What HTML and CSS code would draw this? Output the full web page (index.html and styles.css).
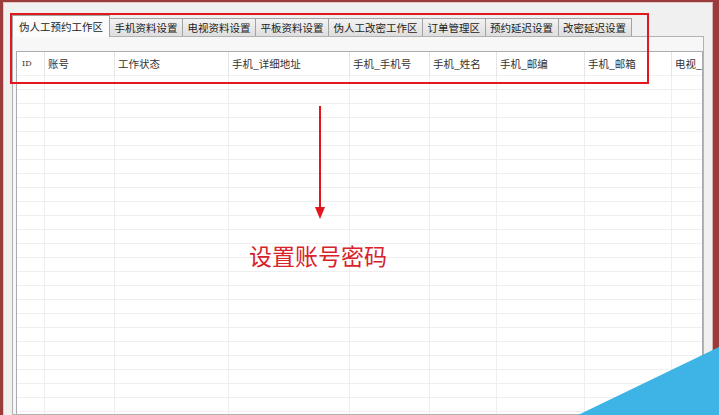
FILE: index.html
```html
<!DOCTYPE html>
<html lang="zh-CN">
<head>
  <meta charset="UTF-8" />
  <title>伪人工预约工作区</title>
  <link rel="stylesheet" href="styles.css">
</head>
<body>

  <div class="window">
    <!-- Tabs -->
    <div class="tabs">
      <div class="tab active">伪人工预约工作区</div>
      <div class="tab">手机资料设置</div>
      <div class="tab">电视资料设置</div>
      <div class="tab">平板资料设置</div>
      <div class="tab">伪人工改密工作区</div>
      <div class="tab">订单管理区</div>
      <div class="tab">预约延迟设置</div>
      <div class="tab">改密延迟设置</div>
    </div>

    <!-- Tab page -->
    <div class="panel">
      <div class="list">
        <div class="list-head">
          <div class="col id">ID</div>
          <div class="col">账号</div>
          <div class="col">工作状态</div>
          <div class="col">手机_详细地址</div>
          <div class="col">手机_手机号</div>
          <div class="col">手机_姓名</div>
          <div class="col">手机_邮编</div>
          <div class="col">手机_邮箱</div>
          <div class="col">电视_</div>
        </div>
        <div class="list-body">
          <div></div><div></div><div></div><div></div><div></div>
          <div></div><div></div><div></div><div></div>
        </div>
      </div>
    </div>
  </div>

  <!-- Annotation -->
  <div class="mark-box"></div>
  <svg class="mark-arrow" width="16" height="116" viewBox="0 0 16 116">
    <line x1="8" y1="0" x2="8" y2="104" stroke="#e2161c" stroke-width="2"/>
    <polygon points="3,101 13,101 8,113" fill="#e2161c"/>
  </svg>
  <div class="mark-text">设置账号密码</div>
  <svg class="corner" width="141" height="68" viewBox="0 0 141 68">
    <polygon points="0,68 141,0 141,68" fill="#3db4e5"/>
  </svg>

</body>
</html>
```

FILE: styles.css
```css
* { margin: 0; padding: 0; box-sizing: border-box; }
html, body { height: 100%; overflow: hidden; }
body {
  font-family: "Noto Sans CJK SC", "DejaVu Sans", sans-serif;
  background-color: #9a3c3c;
  padding: 2px 6px 0 3px;
}

.window {
  display: flex;
  flex-direction: column;
  height: 100%;
  background-color: #f0f0f0;
  box-shadow: inset 1px 1px 0 #e6c4c4, inset -1px 0 0 #d9b0b0;
  padding: 13px 9px 0 9px;
}

/* Tabs */
.tabs {
  display: flex;
  align-items: flex-end;
  height: 21px;
  padding-left: 1px;
}

.tab {
  position: relative;
  height: 18px;
  margin-left: -1px;
  padding: 0 4.5px;
  border: 1px solid #a3a3a3;
  border-bottom: none;
  background: linear-gradient(#f3f3f3, #dedede);
  font-size: 10.5px;
  line-height: 17px;
  color: #222;
  white-space: nowrap;
}

.tab.active {
  height: 22px;
  margin-bottom: -1px;
  padding: 0 6px;
  background: #fbfbfb;
  line-height: 21px;
  z-index: 1;
}

.panel {
  flex: 1;
  border: 1px solid #b2b2b2;
  background-color: #f7f7f7;
  padding: 14px 2px 0 3px;
  display: flex;
}

.list {
  flex: 1;
  background: #fff;
  border: 1px solid #a8acb2;
  border-bottom: none;
  display: flex;
  flex-direction: column;
}

.list-head,
.list-body {
  display: grid;
  grid-template-columns: 28px 70px 114px 121px 80px 67px 88px 87px 1fr;
}

.list-head {
  height: 24px;
  border-bottom: 1px solid #f0f0f0;
}

.col {
  font-size: 10.5px;
  line-height: 24px;
  color: #333;
  padding-left: 3px;
  border-right: 1px solid #e4e4e4;
  white-space: nowrap;
}

.col:last-child { border-right: none; }

.col.id {
  font-family: "DejaVu Serif", serif;
  font-size: 8px;
  padding-left: 5px;
}

.list-body {
  flex: 1;
  background: repeating-linear-gradient(to bottom, #fff 0 13px, #efefef 13px 14px);
}

.list-body div { border-right: 1px solid #eeeeee; }
.list-body div:last-child { border-right: none; }

/* Annotation */
.mark-box {
  position: absolute;
  left: 10px;
  top: 13px;
  width: 639px;
  height: 71px;
  border: 2px solid #e3181e;
}

.mark-arrow {
  position: absolute;
  left: 312px;
  top: 106px;
}

.mark-text {
  position: absolute;
  left: 249px;
  top: 239px;
  font-size: 23px;
  line-height: 32px;
  color: #d8232a;
}

.corner {
  position: absolute;
  right: 0;
  bottom: 0;
}
```
